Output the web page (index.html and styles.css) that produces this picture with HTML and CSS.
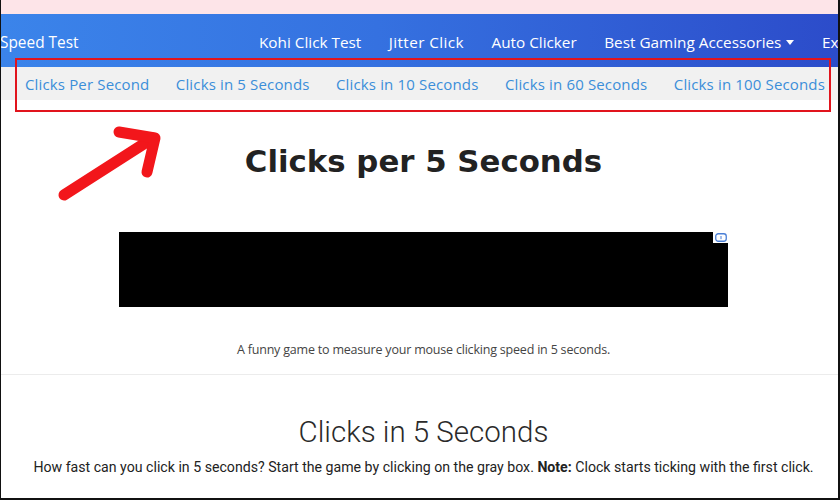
FILE: index.html
```html
<!DOCTYPE html>
<html lang="en">
<head>
<meta charset="utf-8">
<title>Clicks per 5 Seconds</title>
<link rel="stylesheet" href="styles.css">
</head>
<body>
<div class="frame">
  <div class="topstrip"></div>
  <nav class="navbar">
    <span class="brand">Speed Test</span>
    <ul class="navlinks">
      <li>Kohi Click Test</li>
      <li>Jitter Click</li>
      <li>Auto Clicker</li>
      <li>Best Gaming Accessories <span class="caret"></span></li>
      <li>Extra Tools</li>
    </ul>
  </nav>
  <div class="subnav">
    <a class="sublink">Clicks Per Second</a>
    <a class="sublink">Clicks in 5 Seconds</a>
    <a class="sublink">Clicks in 10 Seconds</a>
    <a class="sublink">Clicks in 60 Seconds</a>
    <a class="sublink">Clicks in 100 Seconds</a>
  </div>
  <main class="content">
    <h1 class="title">Clicks per 5 Seconds</h1>
    <div class="ad">
      <span class="adinfo"><svg width="12" height="9" viewBox="0 0 12 9"><rect x="0.75" y="0.75" width="10.5" height="7.5" rx="2.5" fill="none" stroke="#4a7fd6" stroke-width="1.3"/><line x1="6" y1="3" x2="6" y2="6.2" stroke="#4a7fd6" stroke-width="1"/></svg></span>
    </div>
    <p class="caption">A funny game to measure your mouse clicking speed in 5 seconds.</p>
    <section class="game">
      <h2 class="subtitle">Clicks in 5 Seconds</h2>
      <p class="intro">How fast can you click in 5 seconds? Start the game by clicking on the gray box. <b>Note:</b> Clock starts ticking with the first click.</p>
    </section>
  </main>
  <div class="highlight"></div>
  <svg class="arrow" width="120" height="90" viewBox="0 0 120 90">
    <g stroke="#f2161b" stroke-width="11" stroke-linecap="round" stroke-linejoin="round" fill="none">
      <line x1="13" y1="76" x2="102" y2="19"/>
      <polyline points="68,13 104,19 96,53"/>
    </g>
  </svg>
</div>
</body>
</html>
```
FILE: styles.css
```css
* { box-sizing: border-box; }
html, body { margin: 0; padding: 0; background: #000; }
.frame {
  position: relative;
  width: 840px;
  height: 500px;
  overflow: hidden;
  background: #fff;
  border-left: 1px solid #111;
  border-right: 2px solid #111;
  border-bottom: 2px solid #111;
  font-family: "Open Sans", "Noto Sans", sans-serif;
}
.topstrip { height: 14px; background: #fde4e8; }
.navbar {
  height: 53px;
  display: flex;
  align-items: baseline;
  padding-top: 16px;
  line-height: 24px;
  background: linear-gradient(90deg, #3b84ea 0%, #3571e0 45%, #2c4cca 100%);
  color: #fff;
  white-space: nowrap;
  overflow: hidden;
}
.brand { font-size: 15.4px; margin-left: -1px; width: 259px; flex: none; }
.navlinks {
  list-style: none;
  margin: 0;
  padding: 0;
  display: flex;
  gap: 27.5px;
  font-size: 15.3px;
  flex: none;
}
.navlinks li:nth-child(2) { letter-spacing: 0.4px; }
.caret {
  display: inline-block;
  width: 0; height: 0;
  border-left: 4px solid transparent;
  border-right: 4px solid transparent;
  border-top: 5px solid #fff;
  vertical-align: 3px;
  margin-left: 1px;
}
.subnav {
  height: 33px;
  background: #f1f1f1;
  display: flex;
  justify-content: space-between;
  align-items: center;
  padding: 0 13px 0 24px;
  white-space: nowrap;
}
.sublink { color: #3b8ed9; font-size: 15px; letter-spacing: 0.15px; }
.content { text-align: center; padding-left: 8px; }
.title {
  margin: 43px 0 0 0;
  font-family: "DejaVu Sans", "Open Sans", sans-serif;
  font-size: 30.8px;
  line-height: 36px;
  font-weight: 700;
  color: #222;
}
.ad {
  position: relative;
  width: 609px;
  height: 75px;
  margin: 53px 0 0 110px;
  background: #000;
}
.adinfo {
  position: absolute;
  top: 0; right: 0;
  width: 15px; height: 11px;
  background: #fff;
  display: flex;
  align-items: center;
  justify-content: center;
}
.adinfo svg { display: block; }
.caption {
  margin: 34px 0 0 -8px;
  padding: 0 0 15px 8px;
  border-bottom: 1px solid #ececec;
  font-size: 12.5px;
  line-height: 18px;
  color: #444;
  letter-spacing: -0.2px;
}
.game { padding-top: 39px; }
.subtitle {
  margin: 0;
  font-family: Roboto, "Open Sans", sans-serif;
  font-weight: 300;
  font-size: 29.5px;
  line-height: 36px;
  color: #2a2a2a;
}
.intro {
  margin: 7px 0 0 0;
  font-family: Roboto, "Open Sans", sans-serif;
  font-size: 14.15px;
  line-height: 20px;
  color: #222;
}
.intro b { font-weight: 700; }
.highlight {
  position: absolute;
  left: 14px;
  top: 58px;
  width: 816px;
  height: 54px;
  border: 2.5px solid #e1141d;
}
.arrow {
  position: absolute;
  left: 50px;
  top: 119px;
}
```
